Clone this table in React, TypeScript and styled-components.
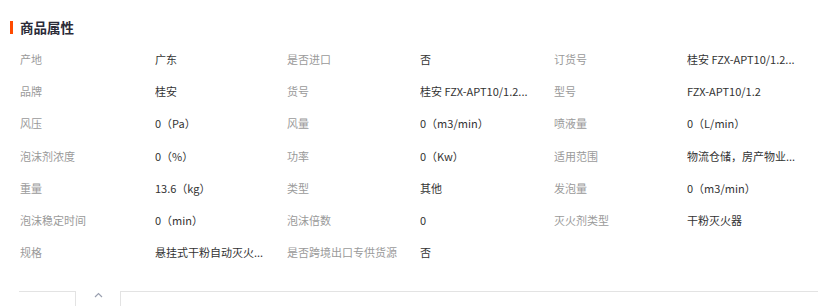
import React from 'react';
import styled, { createGlobalStyle } from 'styled-components';

const GlobalStyle = createGlobalStyle`
  body {
    margin: 0;
    background: #fff;
    font-family: 'Noto Sans CJK SC', 'Noto Sans', sans-serif;
  }
`;

const Page = styled.div`
  width: 822px;
  height: 306px;
  overflow: hidden;
  padding-top: 17px;
  box-sizing: border-box;
`;

const Header = styled.div`
  display: flex;
  align-items: center;
  gap: 7px;
  height: 20px;
  padding-left: 10px;
  margin-bottom: 6px;
`;

const Bar = styled.span`
  width: 3px;
  height: 13px;
  background: #ff4a00;
`;

const Title = styled.h3`
  margin: 0;
  font-size: 13.5px;
  font-weight: bold;
  color: #2b2b38;
`;

const Grid = styled.div`
  display: grid;
  grid-template-columns: 135px 132px 133px 134px 133px 1fr;
  grid-auto-rows: 32.2px;
  padding-left: 20px;
`;

const Cell = styled.div<{ $label?: boolean }>`
  display: flex;
  align-items: center;
  font-size: 11px;
  color: ${(p) => (p.$label ? '#9a9a9a' : '#333')};
  white-space: nowrap;
  overflow: hidden;
`;

const Footer = styled.div`
  display: flex;
  margin: 23px 0 0 19px;
  width: 799px;
  height: 30px;
`;

const Line = styled.div<{ $width?: number }>`
  border-top: 1px solid #e3e3e3;
  ${(p) => (p.$width ? `width: ${p.$width}px;` : 'flex: 1;')}
`;

const Tab = styled.div`
  width: 44px;
  border-left: 1px solid #e3e3e3;
  border-right: 1px solid #e3e3e3;
  display: flex;
  justify-content: center;
  padding-top: 1px;
`;

const rows: [string, string][][] = [
  [['产地', '广东'], ['是否进口', '否'], ['订货号', '桂安 FZX-APT10/1.2...']],
  [['品牌', '桂安'], ['货号', '桂安 FZX-APT10/1.2...'], ['型号', 'FZX-APT10/1.2']],
  [['风压', '0（Pa）'], ['风量', '0（m3/min）'], ['喷液量', '0（L/min）']],
  [['泡沫剂浓度', '0（%）'], ['功率', '0（Kw）'], ['适用范围', '物流仓储，房产物业...']],
  [['重量', '13.6（kg）'], ['类型', '其他'], ['发泡量', '0（m3/min）']],
  [['泡沫稳定时间', '0（min）'], ['泡沫倍数', '0'], ['灭火剂类型', '干粉灭火器']],
  [['规格', '悬挂式干粉自动灭火...'], ['是否跨境出口专供货源', '否']],
];

export default function App() {
  return (
    <Page>
      <GlobalStyle />
      <Header>
        <Bar />
        <Title>商品属性</Title>
      </Header>
      <Grid>
        {rows.map((row) =>
          row.map(([label, value]) => (
            <React.Fragment key={label}>
              <Cell $label>{label}</Cell>
              <Cell>{value}</Cell>
            </React.Fragment>
          ))
        )}
      </Grid>
      <Footer>
        <Line $width={56} />
        <Tab>
          <svg width="9" height="6" viewBox="0 0 9 6">
            <polyline points="1,5 4.5,1.5 8,5" fill="none" stroke="#9aa0b0" strokeWidth="1.2" />
          </svg>
        </Tab>
        <Line />
      </Footer>
    </Page>
  );
}
